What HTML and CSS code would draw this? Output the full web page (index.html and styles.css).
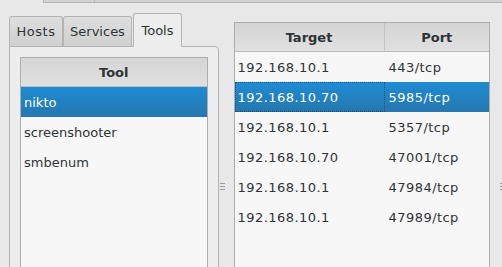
FILE: index.html
```html
<!DOCTYPE html>
<html lang="en">

<head>
    <meta charset="UTF-8">
    <meta name="viewport" content="width=device-width, initial-scale=1.0">
    <title>Tools</title>
    <link rel="stylesheet" href="styles.css">
</head>

<body>

    <div class="topbar">
        <div class="tb-gap"></div>
        <div class="tb-tab tb-first"></div>
        <div class="tb-tab tb-rest"></div>
    </div>

    <div class="main">
        <div class="notebook">
            <div class="tabs">
                <div class="tab tab-hosts">Hosts</div>
                <div class="tab tab-services">Services</div>
                <div class="tab tab-tools active">Tools</div>
            </div>
            <div class="page">
                <div class="list tool-list">
                    <div class="list-head">
                        <div class="head-cell">Tool</div>
                    </div>
                    <div class="row selected">
                        <div class="cell">nikto</div>
                    </div>
                    <div class="row">
                        <div class="cell">screenshooter</div>
                    </div>
                    <div class="row">
                        <div class="cell">smbenum</div>
                    </div>
                </div>
            </div>
        </div>

        <div class="splitter">
            <div class="grip"></div>
        </div>

        <div class="list target-list">
            <div class="list-head">
                <div class="head-cell head-target">Target</div>
                <div class="head-cell">Port</div>
            </div>
            <div class="row">
                <div class="cell">192.168.10.1</div>
                <div class="cell cell-port">443/tcp</div>
            </div>
            <div class="row selected">
                <div class="cell focused">192.168.10.70</div>
                <div class="cell cell-port">5985/tcp</div>
            </div>
            <div class="row">
                <div class="cell">192.168.10.1</div>
                <div class="cell cell-port">5357/tcp</div>
            </div>
            <div class="row">
                <div class="cell">192.168.10.70</div>
                <div class="cell cell-port">47001/tcp</div>
            </div>
            <div class="row">
                <div class="cell">192.168.10.1</div>
                <div class="cell cell-port">47984/tcp</div>
            </div>
            <div class="row">
                <div class="cell">192.168.10.1</div>
                <div class="cell cell-port">47989/tcp</div>
            </div>
        </div>

        <div class="splitter splitter-right">
            <div class="grip"></div>
        </div>
    </div>

</body>

</html>
```

FILE: styles.css
```css
html,
body {
    margin: 0;
    height: 267px;
    overflow: hidden;
}

body {
    background-color: #e8e8e8;
    font-family: 'DejaVu Sans', sans-serif;
    font-size: 13px;
    color: #2e3436;
}

/* strip of the outer tab bar, cut off at the top */
.topbar {
    display: flex;
    height: 3px;
}

.topbar .tb-gap {
    width: 43px;
}

.topbar .tb-tab {
    height: 2px;
    background-color: #d3d3d3;
    border-left: 1px solid #b5b5b5;
    border-bottom: 1px solid #b5b5b5;
}

.topbar .tb-first {
    width: 50px;
}

.topbar .tb-rest {
    flex: 1;
}

.main {
    display: flex;
    height: 290px;
}

/* left notebook */
.notebook {
    display: flex;
    flex-direction: column;
    width: 210px;
    margin: 10px 0 0 9px;
}

.notebook .tabs {
    display: flex;
    align-items: flex-end;
}

.notebook .tab {
    box-sizing: border-box;
    height: 30px;
    padding-top: 7px;
    line-height: 16px;
    text-align: center;
    border: 1px solid #b4b4b4;
    border-bottom: none;
    border-radius: 3px 3px 0 0;
    background: linear-gradient(to bottom, #dedede, #d0d0d0);
}

.notebook .tab-hosts {
    width: 54px;
    letter-spacing: 0.5px;
}

.notebook .tab-services {
    width: 69px;
    margin-right: 1px;
}

.notebook .tab-tools {
    width: 49px;
}

.notebook .tab.active {
    position: relative;
    z-index: 1;
    height: 34px;
    padding-top: 9px;
    margin-bottom: -1px;
    background: #ededed;
}

.notebook .page {
    flex: 1;
    padding: 10px 10px 0;
    background-color: #ededed;
    border: 1px solid #b4b4b4;
    border-top-right-radius: 4px;
}

/* tree views */
.list {
    box-sizing: border-box;
    background-color: #f7f7f7;
    border: 1px solid #adadad;
}

.list .list-head {
    display: grid;
    grid-template-columns: 1fr;
    height: 28px;
    border-bottom: 1px solid #bcbcbc;
    background: linear-gradient(to bottom, #d5d5d5, #e0e0e0);
}

.list .head-cell {
    padding-top: 1px;
    line-height: 27px;
    font-weight: bold;
    text-align: center;
}

.list .row {
    display: grid;
    grid-template-columns: 1fr;
    height: 30px;
}

.list .cell {
    padding: 2px 0 0 3px;
    line-height: 28px;
    white-space: nowrap;
}

.list .row.selected {
    background: linear-gradient(to bottom, #1e8cd4, #2677ad);
    color: #ffffff;
}

.tool-list {
    height: 240px;
}

.target-list {
    width: 257px;
    height: 270px;
    margin-top: 19px;
}

.target-list .list-head,
.target-list .row {
    grid-template-columns: 150px 1fr;
}

.target-list .head-target {
    border-right: 1px solid #c2c2c2;
}

.target-list .row .cell {
    letter-spacing: 0.45px;
}

.target-list .cell-port {
    padding-left: 4px;
}

.target-list .cell.focused {
    outline: 1px dotted rgba(20, 40, 70, 0.55);
    outline-offset: -1px;
}

/* paned handles */
.splitter {
    width: 15px;
    padding-top: 180px;
}

.splitter .grip {
    width: 5px;
    height: 7px;
    margin-left: 1px;
    background: linear-gradient(to bottom, #9c9c9c 1px, transparent 1px);
    background-size: 5px 3px;
}

.splitter-right {
    width: 12px;
}

.splitter-right .grip {
    margin-left: 10px;
}
```
